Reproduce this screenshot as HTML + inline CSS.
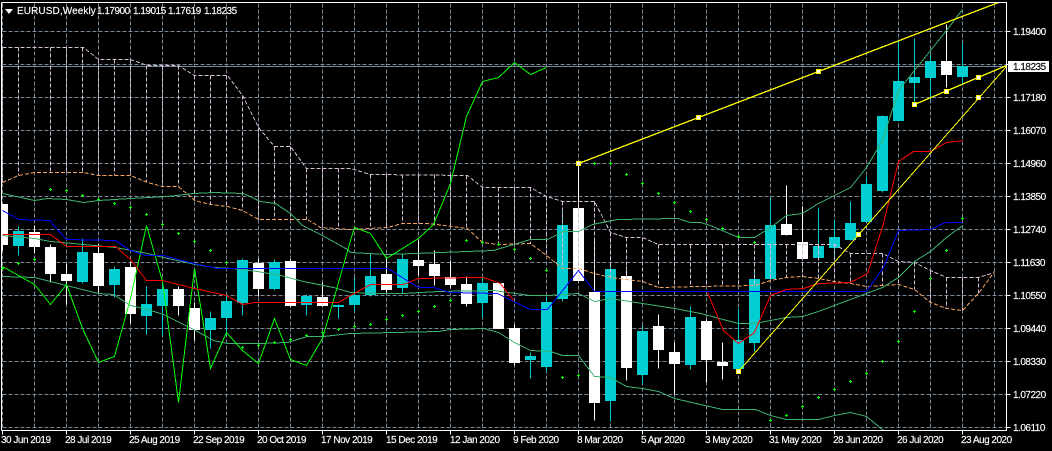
<!DOCTYPE html>
<html><head><meta charset="utf-8"><style>
html,body{margin:0;padding:0;background:#000;width:1052px;height:451px;overflow:hidden}
svg{display:block}
text{font-family:"Liberation Sans",sans-serif;font-size:10px;fill:#fff;stroke:#fff;stroke-width:.15px;letter-spacing:-.5px}
</style></head><body>
<svg width="1052" height="451" viewBox="0 0 1052 451" xmlns="http://www.w3.org/2000/svg">
<rect width="1052" height="451" fill="#000"/>
<g transform="translate(.5 .5)" fill="none" shape-rendering="crispEdges">
<path stroke="#778899" stroke-dasharray="4 2" d="M2 31H1006M2 64H1006M2 97H1006M2 130H1006M2 163H1006M2 196H1006M2 229H1006M2 262H1006M2 295H1006M2 328H1006M2 361H1006M2 394H1006M2 427H1006M2 3V430M34 3V430M66 3V430M98 3V430M130 3V430M162 3V430M194 3V430M226 3V430M258 3V430M290 3V430M322 3V430M354 3V430M386 3V430M418 3V430M450 3V430M482 3V430M514 3V430M546 3V430M578 3V430M610 3V430M642 3V430M674 3V430M706 3V430M738 3V430M770 3V430M802 3V430M834 3V430M866 3V430M898 3V430M930 3V430M962 3V430M994 3V430"/>
<path stroke="#778899" d="M2 66H1006"/>
<!-- wicks -->
<path stroke="#00CED1" d="M18 226V255M82 238V283M114 266V297M146 286V334M162 280V335M210 311V348M226 293V335M242 258V315M274 259V290M306 294V315M338 304V318M354 277V311M370 253V296M402 254V293M482 276V317M530 352V378M546 296V371M562 210V301M610 265V421M642 325V383M690 306V369M738 308V369M754 268V351M770 197V279M818 207V258M834 219V258M850 201V240M866 176V222M882 115V192M898 40V121M914 38V104M930 54V100M962 43V85"/>
<path stroke="#fff" d="M2 204V250M34 225V253M50 244V282M66 263V304M98 243V292M130 261V323M178 286V315M194 302V340M258 258V296M290 259V307M322 282V306M386 258V292M418 240V275M434 250V285M450 260V287M466 276V306M514 324V365M578 163V281M594 240V420M626 266V380M658 314V368M674 342V394M706 319V382M722 342V379M786 185V235M802 206V259M946 24V87"/>
</g>
<!-- bodies -->
<path fill="#00CED1" d="M13 231h11V246H13zM77 252h11V282H77zM109 269h11V285H109zM141 304h11V316H141zM157 289h11V306H157zM205 318h11V330H205zM221 301h11V318H221zM237 260h11V303H237zM269 262h11V289H269zM301 296h11V305H301zM333 305h11V307H333zM349 295h11V305H349zM365 276h11V295H365zM397 259h11V288H397zM477 283h11V303H477zM525 356h11V360H525zM541 302h11V367H541zM557 225h11V299H557zM605 269h11V401H605zM637 331h11V375H637zM685 317h11V365H685zM733 340h11V369H733zM749 279h11V343H749zM765 225h11V279H765zM813 246h11V258H813zM829 237h11V248H829zM845 223h11V240H845zM861 184h11V222H861zM877 116h11V191H877zM893 81h11V121H893zM909 77h11V83H909zM925 61h11V78H925zM957 66h11V77H957z"/>
<path fill="#fff" d="M2 204h6V245H2zM29 232h11V247H29zM45 247h11V274H45zM61 274h11V281H61zM93 253h11V286H93zM125 267h11V314H125zM173 289h11V306H173zM189 308h11V330H189zM253 263h11V289H253zM285 261h11V306H285zM317 297h11V306H317zM381 274h11V290H381zM413 260h11V266H413zM429 264h11V276H429zM445 277h11V285H445zM461 284h11V304H461zM493 283h11V329H493zM509 328h11V363H509zM573 208h11V281H573zM589 292h11V403H589zM621 276h11V368H621zM653 326h11V350H653zM669 352h11V364H669zM701 321h11V360H701zM717 362h11V366H717zM781 224h11V235H781zM797 242h11V259H797zM941 61h11V75H941z"/>
<g transform="translate(.5 .5)" fill="none" shape-rendering="crispEdges">
<!-- cloud -->
<path stroke="#D8BFD8" stroke-dasharray="4 2" d="M2 47V182M18 47V175M50 47V172M66 47V172M82 47V172M98 59V175M114 59V175M130 59V175M146 65V182M162 65V186M178 65V186M194 75V200M210 75V204M226 75V206M242 95V210M258 127V219M274 146V219M290 146V219M306 168V219M322 168V227M338 168V228M370 174V229M386 174V227M402 174V223M418 174V223M434 174V225M450 174V225M466 175V228M482 187V242M498 187V244M514 187V244M530 187V243M546 196V255M562 201V268M578 201V268M594 201V273M610 232V277M626 237V279M642 237V281M658 244V287M674 244V286M690 244V286M706 244V285M722 244V285M738 244V285M754 244V285M770 244V280M786 244V277M802 244V276M818 244V278M834 244V281M850 253V283M882 253V285M898 261V284M914 262V289M930 270V302M946 277V308M962 277V310M978 277V293"/>
<polyline stroke="#D8BFD8" stroke-dasharray="4 2" points="2,47 83,47 98,59 130,59 147,65 178,65 194,75 227,75 242,95 258,127 274,146 290,146 306,168 350,168 370,174 467,175 482,187 530,187 546,196 562,201 594,201 610,232 626,237 642,237 658,244 834,244 850,253 882,253 898,261 914,262 930,270 946,277 978,277 994,272"/>
<polyline stroke="#F4A460" stroke-dasharray="4 2" points="2,182 18,175 34,172 83,172 98,175 130,175 147,182 162,186 178,186 194,200 210,204 227,206 242,210 258,219 307,219 320,227 350,229 387,227 402,223 428,223 467,228 482,242 498,244 530,243 546,255 562,268 578,268 594,273 610,277 642,281 658,287 700,286 755,285 770,280 786,277 802,276 818,278 834,281 850,283 866,286 898,284 914,289 930,302 946,308 962,310 978,293 994,271"/>
<!-- bands -->
<g stroke="#3CB371">
<polyline points="2,193 34,200 47,198 66,199 83,202 98,200 130,198 167,196 193,193 213,192 243,193 260,201 275,203 290,213 302,225 322,235 347,249 350,252 387,254 440,252 493,250 530,239 547,239 563,231 578,231 592,224 617,219 677,218 690,222 700,222 710,225 738,237 754,237 770,227 786,215 802,213 818,203 834,195 850,187 866,167 882,140 898,90 914,70 930,50 946,30 962,9"/>
<polyline points="2,235 34,238 50,241 83,244 115,247 147,253 163,257 195,264 213,267 233,268 257,271 280,275 303,281 333,287 350,292 383,293 403,293 438,291 493,290 530,295 547,295 578,293 594,301 610,298 642,303 674,308 700,313 738,323 754,323 770,320 786,317 802,316 818,311 834,305 850,299 866,293 882,287 898,277 914,261 930,251 946,237 962,225"/>
<polyline points="2,276 34,277 66,285 98,293 113,294 130,305 147,309 163,314 195,330 213,340 227,343 258,343 287,342 307,336 323,336 350,333 393,332 438,331 450,329 483,328 498,332 514,342 530,350 550,351 562,355 578,355 594,376 610,377 626,386 642,388 658,391 674,398 700,404 722,409 755,409 770,415 786,419 818,419 834,415 850,412 866,416 883,430"/>
</g>
<!-- chikou -->
<polyline stroke="#00FF00" points="2,266 34,284 50,304 66,284 82,328 98,362 114,356 130,298 146,225 162,281 178,402 194,268 210,368 226,332 242,350 258,363 274,318 290,359 306,365 322,338 350,240 354,227 370,233 386,258 402,248 418,238 433,224 450,183 466,116 482,81 498,77 514,62 530,74 546,67"/>
<!-- blue -->
<polyline stroke="#0000FF" points="2,210 18,219 50,220 53,225 66,239 115,240 130,250 146,255 163,255 193,263 217,268 387,268 418,287 433,287 450,292 497,293 513,301 530,309 547,309 578,270 594,291 866,291 883,267 898,230 930,229 945,222 962,222"/>
<!-- red -->
<polyline stroke="#FF0000" points="2,234 50,234 66,246 115,246 130,259 146,280 162,280 194,288 226,295 242,304 254,302 338,302 350,295 370,284 403,284 418,278 475,277 483,277 500,283 513,300"/>
<polyline stroke="#FF0000" points="707,292 723,330 738,343 754,332 770,295 786,289 803,288 818,283 850,282 867,273 883,223 898,161 913,151 930,151 946,142 962,140"/>
<!-- trend lines -->
<path stroke="#FFFF00" stroke-width="1.3" d="M578 163L998 2"/>
<path stroke="#FFFF00" stroke-width="1.3" d="M914 104L1006 65"/>
<path stroke="#FFFF00" d="M738 371L1006 66"/>
<!-- frame & ticks -->
<path stroke="#fff" d="M1 2H1006V430H1M1 2V430M1006 31h4M1006 64h4M1006 97h4M1006 130h4M1006 163h4M1006 196h4M1006 229h4M1006 262h4M1006 295h4M1006 328h4M1006 361h4M1006 394h4M1006 427h4M2 430v4M66 430v4M130 430v4M194 430v4M258 430v4M322 430v4M386 430v4M450 430v4M514 430v4M578 430v4M642 430v4M706 430v4M770 430v4M834 430v4M898 430v4M962 430v4"/>
</g>
<!-- sar dots -->
<path stroke="#00FF00" fill="none" shape-rendering="crispEdges" d="M49 189.5h3M50.500 188v3M65 190.5h3M66.500 189v3M81 195.500h3M82.500 194v3M97 199.500h3M98.500 198v3M113 203.500h3M114.500 202v3M129 207.500h3M130.500 206v3M145 214.500h3M146.500 213v3M161 224.500h3M162.500 223v3M177 233.500h3M178.500 232v3M193 241.500h3M194.500 240v3M209 250.500h3M210.500 249v3M225 262.500h3M226.500 261v3M241 347.500h3M242.500 346v3M257 345.500h3M258.500 344v3M273 342.500h3M274.500 341v3M289 339.500h3M290.500 338v3M305 335.500h3M306.500 334v3M321 332.500h3M322.500 331v3M337 329.500h3M338.500 328v3M1 268.500h3M2.500 267v3M17 263.500h3M18.500 262v3M33 259.500h3M34.500 258v3M353 326.500h3M354.500 325v3M369 324.500h3M370.500 323v3M385 319.500h3M386.500 318v3M401 315.500h3M402.500 314v3M417 311.500h3M418.500 310v3M433 306.500h3M434.500 305v3M449 300.500h3M450.500 299v3M465 240.500h3M466.500 239v3M481 242.500h3M482.500 241v3M497 244.500h3M498.500 243v3M513 249.500h3M514.500 248v3M529 258.500h3M530.500 257v3M545 270.500h3M546.500 269v3M561 377.500h3M562.500 376v3M577 375.500h3M578.500 374v3M593 163.500h3M594.500 162v3M609 163.500h3M610.500 162v3M625 174.500h3M626.500 173v3M641 183.500h3M642.500 182v3M657 193.500h3M658.500 192v3M673 202.500h3M674.500 201v3M689 211.500h3M690.500 210v3M705 219.500h3M706.500 218v3M721 228.500h3M722.500 227v3M737 236.500h3M738.500 235v3M753 242.500h3M754.500 241v3M769 420.500h3M770.500 419v3M785 415.500h3M786.500 414v3M801 406.500h3M802.500 405v3M817 397.500h3M818.500 396v3M833 389.500h3M834.500 388v3M849 381.500h3M850.500 380v3M865 373.500h3M866.500 372v3M881 361.500h3M882.500 360v3M897 341.500h3M898.500 340v3M913 311.500h3M914.500 310v3M929 278.500h3M930.500 277v3M945 250.500h3M946.500 249v3M961 218.500h3M962.500 217v3"/>
<!-- handles -->
<g fill="#fff" stroke="#FFFF00" shape-rendering="crispEdges">
<rect x="576.500" y="161.500" width="4" height="4"/><rect x="696.500" y="115.500" width="4" height="4"/><rect x="816.500" y="69.500" width="4" height="4"/><rect x="912.500" y="102.500" width="4" height="4"/><rect x="944.500" y="89.500" width="4" height="4"/><rect x="976.500" y="75.500" width="4" height="4"/><rect x="736.500" y="369.500" width="4" height="4"/><rect x="856.500" y="232.500" width="4" height="4"/><rect x="976.500" y="95.500" width="4" height="4"/>
</g>
<!-- title -->
<path fill="#fff" d="M5 9h8l-4 5z"/>
<text x="17" y="14" style="letter-spacing:.1px">EURUSD,Weekly</text>
<text x="97" y="14">1.17900</text>
<text x="133" y="14">1.19015</text>
<text x="168" y="14">1.17619</text>
<text x="204" y="14">1.18235</text>
<!-- price axis -->
<rect x="1008" y="61" width="41" height="11" fill="#fff"/>
<text x="1013" y="35">1.19400</text>
<text x="1013" y="70" style="fill:#000;stroke:#000">1.18235</text>
<text x="1013" y="101">1.17180</text>
<text x="1013" y="134">1.16070</text>
<text x="1013" y="167">1.14960</text>
<text x="1013" y="200">1.13850</text>
<text x="1013" y="233">1.12740</text>
<text x="1013" y="266">1.11630</text>
<text x="1013" y="299">1.10550</text>
<text x="1013" y="332">1.09440</text>
<text x="1013" y="365">1.08330</text>
<text x="1013" y="398">1.07220</text>
<text x="1013" y="431">1.06110</text>
<!-- date axis -->
<text x="1" y="443">30 Jun 2019</text>
<text x="65" y="443">28 Jul 2019</text>
<text x="129" y="443">25 Aug 2019</text>
<text x="193" y="443">22 Sep 2019</text>
<text x="257" y="443">20 Oct 2019</text>
<text x="321" y="443">17 Nov 2019</text>
<text x="386" y="443">15 Dec 2019</text>
<text x="450" y="443">12 Jan 2020</text>
<text x="513" y="443">9 Feb 2020</text>
<text x="577" y="443">8 Mar 2020</text>
<text x="641" y="443">5 Apr 2020</text>
<text x="705" y="443">3 May 2020</text>
<text x="769" y="443">31 May 2020</text>
<text x="833" y="443">28 Jun 2020</text>
<text x="897" y="443">26 Jul 2020</text>
<text x="961" y="443">23 Aug 2020</text>
</svg>
</body></html>
